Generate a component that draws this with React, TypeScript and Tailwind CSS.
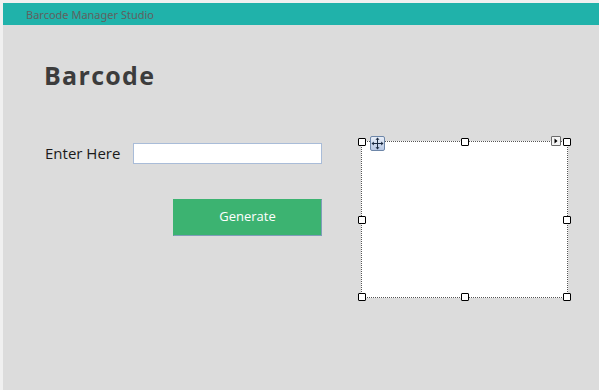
import React from "react";

function Handle({ className }: { className: string }) {
  return <div className={`absolute w-[8px] h-[8px] bg-white border border-black rounded-[1px] ${className}`} />;
}

export default function App() {
  return (
    <div className="w-[599px] h-[390px] bg-[#f0f0f0] pt-[3px] pl-[3px] flex flex-col overflow-hidden" style={{ fontFamily: '"Open Sans", sans-serif' }}>
      <div className="h-[22px] bg-[#20b2aa] flex items-center pl-[23px] shrink-0">
        <span className="text-[11px] text-[#606060] leading-none" style={{ fontFamily: '"Noto Sans", sans-serif' }}>Barcode Manager Studio</span>
      </div>
      <div className="flex-1 bg-[#dcdcdc] flex">
        <div className="w-[320px] pl-[41px] pt-[35px] flex flex-col">
          <h1 className="text-[25px] font-bold text-[#3c3c3c] leading-[30px] tracking-[1.3px]">Barcode</h1>
          <div className="mt-[52px] flex items-center">
            <span className="text-[15px] text-[#1a1a1a] w-[89px] ml-[1px]">Enter Here</span>
            <input className="w-[189px] h-[21px] -ml-[1px] bg-white border border-[#a9bcd8] outline-none" />
          </div>
          <div className="mt-[34px] flex justify-end pr-[1px]">
            <button className="w-[149px] h-[37px] bg-[#3cb371] border border-[#3cb371] border-r-[#7f9db9] border-b-[#7f9db9] text-white text-[13px]">Generate</button>
          </div>
        </div>
        <div className="ml-[38px] mt-[116px]">
          <div className="relative w-[207px] h-[157px] bg-white border border-dotted border-[#555]">
            <Handle className="-left-[4px] -top-[4px]" />
            <Handle className="left-[99px] -top-[4px]" />
            <Handle className="-right-[4px] -top-[4px]" />
            <Handle className="-left-[4px] top-[74px]" />
            <Handle className="-right-[4px] top-[74px]" />
            <Handle className="-left-[4px] -bottom-[4px]" />
            <Handle className="left-[99px] -bottom-[4px]" />
            <Handle className="-right-[4px] -bottom-[4px]" />
            <div className="absolute left-[8px] -top-[6px] w-[15px] h-[15px] rounded-[2px] border border-[#6d86a8] bg-gradient-to-b from-[#e8eef8] to-[#b8c8e4] flex items-center justify-center">
              <svg width="13" height="13" viewBox="0 0 13 13">
                <path d="M6.5 1 L6.5 12 M1 6.5 L12 6.5" stroke="#1a2a40" strokeWidth="1" />
                <path d="M6.5 0.5 L4.5 2.8 L8.5 2.8 Z M6.5 12.5 L4.5 10.2 L8.5 10.2 Z M0.5 6.5 L2.8 4.5 L2.8 8.5 Z M12.5 6.5 L10.2 4.5 L10.2 8.5 Z" fill="#1a2a40" />
              </svg>
            </div>
            <div className="absolute right-[6px] -top-[6px] w-[10px] h-[10px] rounded-[1px] border border-[#6b6b6b] bg-[#f4f4f4] flex items-center justify-center">
              <svg width="6" height="6" viewBox="0 0 6 6">
                <path d="M1.5 0.5 L4.5 3 L1.5 5.5 Z" fill="#000" />
              </svg>
            </div>
          </div>
        </div>
      </div>
    </div>
  );
}
